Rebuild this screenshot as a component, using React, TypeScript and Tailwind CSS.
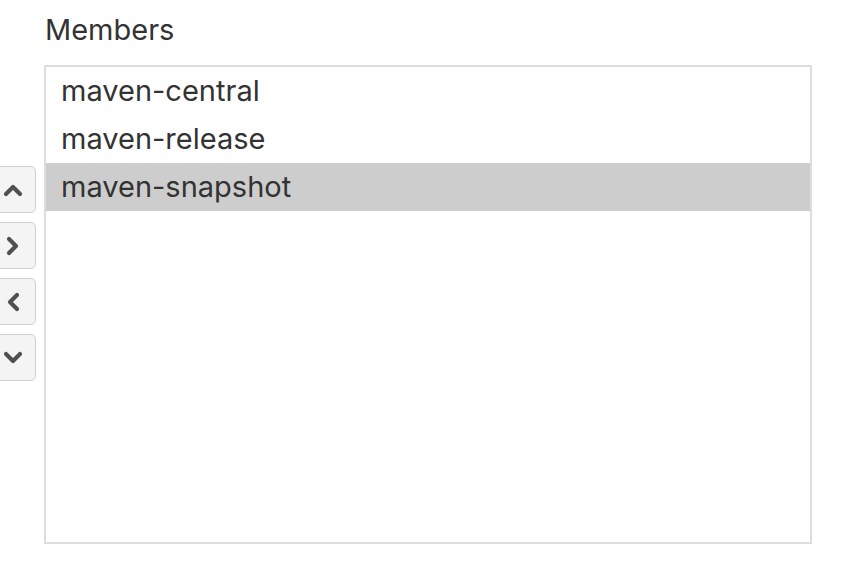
import React, { useState } from 'react';

const members = ['maven-central', 'maven-release', 'maven-snapshot'];

// chevron drawn pointing up; rotated for the other directions
function Chevron({ rotate }: { rotate: string }) {
  return (
    <svg viewBox="0 0 20 20" className={`h-[20px] w-[20px] ${rotate}`} fill="none">
      <polyline
        points="3,14 10,7 17,14"
        stroke="currentColor"
        strokeWidth="4.2"
        strokeLinecap="round"
        strokeLinejoin="round"
      />
    </svg>
  );
}

function MoveButton({ children, label }: { children: React.ReactNode; label: string }) {
  return (
    <button
      type="button"
      aria-label={label}
      className="flex h-[47px] w-[46px] items-center justify-center rounded-[5px] border border-[#d0d0d0] bg-[#f4f4f4] text-[#505050]"
    >
      {children}
    </button>
  );
}

export default function App() {
  const [selected, setSelected] = useState('maven-snapshot');

  return (
    <div className="min-h-[576px] w-[842px] overflow-hidden bg-white text-[#333]" style={{ fontFamily: 'Inter, "Open Sans", sans-serif' }}>
      <div className="flex -ml-[10px] pt-[8px]">
        <div className="flex w-[46px] flex-col gap-[9px] pt-[158px]">
          <MoveButton label="Move up">
            <Chevron rotate="" />
          </MoveButton>
          <MoveButton label="Add">
            <Chevron rotate="rotate-90" />
          </MoveButton>
          <MoveButton label="Remove">
            <Chevron rotate="-rotate-90" />
          </MoveButton>
          <MoveButton label="Move down">
            <Chevron rotate="rotate-180" />
          </MoveButton>
        </div>
        <div className="ml-[8px]">
          <div className="pl-[1px] text-[29px] leading-[44px]">Members</div>
          <ul className="mt-[13px] h-[479px] w-[768px] border-2 border-[#dddddd] bg-white">
            {members.map((m) => (
              <li
                key={m}
                onClick={() => setSelected(m)}
                className={`h-[48px] pl-[15px] text-[29px] leading-[48px] ${selected === m ? 'bg-[#cdcdcd]' : ''}`}
              >
                {m}
              </li>
            ))}
          </ul>
        </div>
      </div>
    </div>
  );
}
